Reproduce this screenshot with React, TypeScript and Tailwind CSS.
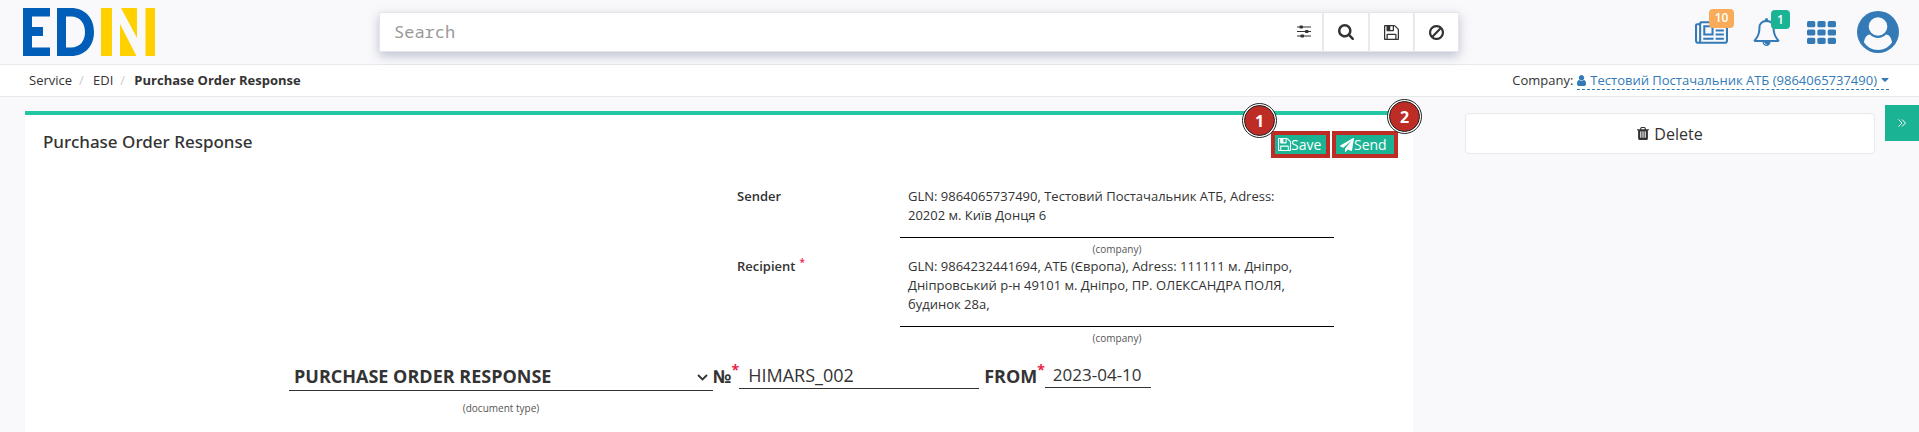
import type { ReactNode } from "react";

type IconProps = { className?: string; viewBox?: string; children: ReactNode };

function Icon({ className = "", viewBox = "0 0 1792 1792", children }: IconProps) {
  return (
    <svg className={className} viewBox={viewBox} fill="currentColor" aria-hidden="true">
      {children}
    </svg>
  );
}

function FloppyIcon({ className }: { className?: string }) {
  return (
    <Icon className={className} viewBox="128 128 1536 1536">
      <path d="M512 1536h768v-384h-768v384zm896 0h128v-896q0-14-10-38.5t-20-34.5l-281-281q-10-10-34-20t-39-10v416q0 40-28 68t-68 28h-576q-40 0-68-28t-28-68v-416h-128v1280h128v-416q0-40 28-68t68-28h832q40 0 68 28t28 68v416zm-384-928v-320q0-13-9.5-22.5t-22.5-9.5h-192q-13 0-22.5 9.5t-9.5 22.5v320q0 13 9.5 22.5t22.5 9.5h192q13 0 22.5-9.5t9.5-22.5zm640 32v928q0 40-28 68t-68 28h-1344q-40 0-68-28t-28-68v-1344q0-40 28-68t68-28h928q40 0 88 20t76 48l280 280q28 28 48 76t20 88z" />
    </Icon>
  );
}

function Logo() {
  return (
    <svg className="h-12 w-[132px]" viewBox="0 0 132 48" role="img" aria-label="EDIN">
      <g fill="#005eb8">
        <path d="M0 0H27V8.500H9V19H20V28H9V39.500H27V48H0Z" />
        <path fillRule="evenodd" d="M34 0H48C62 0 71 10 71 24S62 48 48 48H34ZM43 8.500V39.500H48C57 39.500 62 33 62 24S57 8.500 48 8.500Z" />
      </g>
      <g fill="#ffd100">
        <path d="M78 0H89V48H78ZM97 16L113.500 48H97ZM98 0H114V30ZM122.500 0H132V48H122.500Z" />
      </g>
    </svg>
  );
}

const toolButton =
  "flex items-center justify-center border-l-2 border-[#e7eaec] bg-white text-[#333]";

function SearchBar() {
  return (
    <form
      className="mx-auto flex h-10 w-full max-w-[1080px] border border-[#e5e6ec] bg-white shadow-[0_4px_10px_rgba(80,90,130,0.35)]"
      onSubmit={(e) => e.preventDefault()}
    >
      <input
        type="search"
        aria-label="Search"
        placeholder="Search"
        className="min-w-0 flex-1 bg-white px-[14px] font-['Noto_Sans_Mono','DejaVu_Sans_Mono',monospace] text-[17px] text-[#555] outline-none placeholder:text-[#999]"
      />
      <button type="button" aria-label="Filters" className="flex w-9 items-center justify-center text-[#333]">
        <svg className="h-[14px] w-[14px]" viewBox="0 0 14 14" aria-hidden="true">
          <g fill="currentColor">
            <path d="M0 1.500h14v1H0ZM0 6h14v1H0ZM0 10.500h14v1H0Z" />
            <rect x="2.500" y="0.500" width="3.500" height="3" rx="0.800" />
            <rect x="8" y="5" width="3.500" height="3" rx="0.800" />
            <rect x="3.500" y="9.500" width="3.500" height="3" rx="0.800" />
          </g>
        </svg>
      </button>
      <button type="submit" aria-label="Run search" className={`${toolButton} w-[46px]`}>
        <Icon className="h-4 w-4" viewBox="64 128 1664 1664">
          <path d="M1216 832q0-185-131.500-316.500t-316.500-131.500-316.500 131.500-131.500 316.500 131.500 316.500 316.500 131.500 316.500-131.500 131.500-316.500zm512 832q0 52-38 90t-90 38q-54 0-90-38l-343-342q-179 124-399 124-143 0-273.500-55.500t-225-150-150-225-55.500-273.500 55.500-273.500 150-225 225-150 273.500-55.500 273.500 55.500 225 150 150 225 55.500 273.500q0 220-124 399l343 343q37 37 37 90z" />
        </Icon>
      </button>
      <button type="button" aria-label="Save search" className={`${toolButton} w-[45px]`}>
        <FloppyIcon className="h-[15px] w-[15px]" />
      </button>
      <button type="reset" aria-label="Clear search" className={`${toolButton} w-[45px]`}>
        <Icon className="h-[15px] w-[15px]" viewBox="128 125 1536 1536">
          <path d="M1440 893q0-161-87-295l-754 753q137 89 297 89 111 0 211.500-43.500t173.500-116.500 116-174.500 43-212.500zm-999 299l755-754q-135-91-300-91-148 0-273 73t-198 199-73 274q0 162 89 299zm1223-299q0 157-61 300t-163.500 246-245 164-298.500 61-298.500-61-245-164-163.500-246-61-300 61-299.500 163.500-245.500 245-164 298.500-61 298.500 61 245 164 163.500 245.500 61 299.500z" />
        </Icon>
      </button>
    </form>
  );
}

function Header() {
  return (
    <header className="flex h-16 items-center pr-5 pl-[23px]">
      <a href="#home" className="w-[356px] shrink-0">
        <Logo />
      </a>
      <div className="min-w-0 flex-1">
        <SearchBar />
      </div>
      <nav className="flex w-[440px] shrink-0 items-center justify-end text-[#337ab7]">
        <a href="#news" aria-label="News" className="relative mr-[25px]">
          <Icon className="h-[23px] w-[33px]" viewBox="0 256 2048 1408">
            <path d="M1024 640h-384v384h384v-384zm128 640v128h-640v-128h640zm0-768v640h-640v-640h640zm640 768v128h-512v-128h512zm0-256v128h-512v-128h512zm0-256v128h-512v-128h512zm0-256v128h-512v-128h512zm-1536 960v-960h-128v960q0 26 19 45t45 19 45-19 19-45zm1664 0v-1040q0-48-48-48h-1440q-48 0-48 48v1040q0 33-11 64h1483q26 0 45-19t19-45zm128-1056v1056q0 80-56 136t-136 56h-1664q-80 0-136-56t-56-136v-960q0-128 128-128h128q0-128 128-128h1536q128 0 128 160z" />
          </Icon>
          <span className="absolute -top-3 left-[14px] flex h-[19px] w-[25px] items-center justify-center rounded bg-[#f8ac59] text-xs font-semibold text-white">
            10
          </span>
        </a>
        <a href="#notifications" aria-label="Notifications" className="relative mr-[27px]">
          <Icon className="h-7 w-[27px]" viewBox="64 0 1664 1792">
            <path d="M912 1696q0-16-16-16-59 0-101.500-42.500t-42.500-101.500q0-16-16-16t-16 16q0 73 51.500 124.500t124.500 51.500q16 0 16-16zm-666-288h1300q-266-300-266-832 0-51-24-105t-69-103-121.500-80.500-169.500-31.500-169.500 31.500-121.500 80.500-69 103-24 105q0 532-266 832zm1482 0q0 52-38 90t-90 38h-448q0 106-75 181t-181 75-181-75-75-181h-448q-52 0-90-38t-38-90q50-42 91-88t85-119.500 74.500-158.500 50-206 19.500-260q0-152 117-282.500t307-158.500q-8-19-8-39 0-40 28-68t68-28 68 28 28 68q0 20-8 39 190 28 307 158.500t117 282.500q0 139 19.500 260t50 206 74.500 158.500 85 119.500 91 88z" />
          </Icon>
          <span className="absolute -top-2 left-[18px] flex h-[19px] w-[19px] items-center justify-center rounded bg-[#1ab394] text-xs font-semibold text-white">
            1
          </span>
        </a>
        <a href="#apps" aria-label="Applications" className="mr-[21px]">
          <Icon className="h-[23px] w-[29px]" viewBox="0 0 1792 1408">
            {[0, 640, 1280].map((x) =>
              [0, 512, 1024].map((y) => (
                <rect key={`${x}-${y}`} x={x} y={y} width="512" height="384" rx="96" />
              )),
            )}
          </Icon>
        </a>
        <a href="#profile" aria-label="Profile">
          <svg className="h-[42px] w-[42px]" viewBox="0 0 42 42" aria-hidden="true">
            <circle cx="21" cy="21" r="21" fill="currentColor" />
            <circle cx="21" cy="15.500" r="9.300" fill="#f9f9fb" />
            <path d="M7 31.500C7.500 26.500 10 23.500 13 23.500C17 28 25 28 29 23.500C32 23.500 34.500 26.500 35 31.500C32 36 27 39 21 39S10 36 7 31.500Z" fill="#f9f9fb" />
          </svg>
        </a>
      </nav>
    </header>
  );
}

function Breadcrumbs() {
  return (
    <div className="flex h-[33px] items-center justify-between border-y border-[#e7eaec] bg-white pr-[30px] pl-[29px] text-[13px]">
      <nav aria-label="Breadcrumb">
        <ol className="flex items-center">
          <li>
            <a href="#service">Service</a>
          </li>
          <li className="flex">
            <span className="w-[21px] pl-[7px] text-[#ccc]">/</span>
            <a href="#edi">EDI</a>
          </li>
          <li className="flex">
            <span className="w-[21px] pl-[7px] text-[#ccc]">/</span>
            <strong className="font-bold" aria-current="page">
              Purchase Order Response
            </strong>
          </li>
        </ol>
      </nav>
      <div className="flex items-center gap-1">
        <span>Company:</span>
        <a href="#company" className="flex items-center gap-1 border-b border-dashed border-[#337ab7] leading-[18px] text-[#337ab7]">
          <Icon className="h-[11px] w-[9px]" viewBox="256 128 1280 1536">
            <path d="M1536 1399q0 109-62.500 187t-150.500 78h-854q-88 0-150.500-78t-62.500-187q0-85 8.500-160.500t31.500-152 58.500-131 94-89 134.500-34.500q131 128 313 128t313-128q76 0 134.500 34.500t94 89 58.500 131 31.500 152 8.500 160.500zm-256-887q0 159-112.500 271.500t-271.500 112.500-271.500-112.500-112.500-271.500 112.500-271.500 271.500-112.500 271.500 112.500 112.500 271.500z" />
          </Icon>
          <span>Тестовий Постачальник АТБ (9864065737490)</span>
          <Icon className="h-1 w-2" viewBox="384 640 1024 576">
            <path d="M1408 704q0 26-19 45l-448 448q-19 19-45 19t-45-19l-448-448q-19-19-19-45t19-45 45-19h896q26 0 45 19t19 45z" />
          </Icon>
        </a>
      </div>
    </div>
  );
}

function StepBadge({ className, children }: { className: string; children: ReactNode }) {
  return (
    <span
      className={`absolute flex h-[35px] w-[35px] items-center justify-center rounded-full border border-[#222] bg-white p-px ${className}`}
    >
      <span className="flex h-full w-full items-center justify-center rounded-full border border-[#222] bg-[#bd2d26] text-base font-bold text-white">
        {children}
      </span>
    </span>
  );
}

const actionButton =
  "flex items-center border-4 border-[#bd2d26] bg-[#1ab394] text-sm text-white";

function Actions() {
  return (
    <div className="flex items-start gap-[2px]">
      <div className="relative">
        <button type="button" className={`${actionButton} h-[27px] w-[59px] pl-[3px]`}>
          <FloppyIcon className="h-[13px] w-[13px]" />
          Save
        </button>
        <StepBadge className="-top-7 -left-[29px]">1</StepBadge>
      </div>
      <div className="relative">
        <button type="button" className={`${actionButton} h-[27px] w-[66px] pl-1`}>
          <Icon className="h-[14px] w-[14px]">
            <path d="M1764 11q33 24 27 64l-256 1536q-5 29-32 45-14 8-31 8-11 0-24-5l-453-185-242 295q-18 23-49 23-13 0-22-4-19-7-30.500-23.500t-11.500-36.500v-349l864-1059-1069 925-395-162q-37-14-40-55-2-40 32-59l1664-960q15-9 32-9 20 0 36 11z" />
          </Icon>
          Send
        </button>
        <StepBadge className="-top-8 -right-6">2</StepBadge>
      </div>
    </div>
  );
}

function Party({ label, required, children }: { label: string; required?: boolean; children: ReactNode }) {
  return (
    <div className="flex">
      <dt className="w-[163px] shrink-0 font-semibold">
        {label}
        {required && <sup className="ml-1 text-[10px] text-[#ed1c4a]">*</sup>}
      </dt>
      <dd className="w-[434px]">
        <div className="border-b border-black px-2 pb-3">{children}</div>
        <p className="pt-[3px] text-center text-[10px] leading-4 text-[#555]">(company)</p>
      </dd>
    </div>
  );
}

const Star = () => <sup className="-top-2 text-sm leading-none text-[#ed1c4a]">*</sup>;

function DocumentCard() {
  return (
    <main className="min-w-0 flex-1 border-t-4 border-[#23c6a3] bg-white">
      <div className="flex items-start justify-between pt-4 pr-[15px] pl-[18px]">
        <h1 className="font-['Noto_Sans',sans-serif] text-[17px] leading-[22px] font-medium">Purchase Order Response</h1>
        <Actions />
      </div>
      <dl className="mt-[29px] ml-[712px] text-[13px] leading-[19px]">
        <Party label="Sender">
          GLN: 9864065737490, Тестовий Постачальник АТБ, Adress:
          <br />
          20202 м. Київ Донця 6
        </Party>
        <Party label="Recipient" required>
          GLN: 9864232441694, АТБ (Європа), Adress: 111111 м. Дніпро,
          <br />
          Дніпровський р-н 49101 м. Дніпро, ПР. ОЛЕКСАНДРА ПОЛЯ,
          <br />
          будинок 28а,
        </Party>
      </dl>
      <div className="mt-[14px] ml-[264px] flex items-start pb-5 text-lg">
        <div className="w-[424px]">
          <div className="relative">
            <select
              aria-label="Document type"
              className="h-[31px] w-full appearance-none border-b border-[#333] bg-transparent pt-[2px] pl-[5px] font-bold outline-none"
            >
              <option>PURCHASE ORDER RESPONSE</option>
            </select>
            <svg className="pointer-events-none absolute top-[14px] right-[5px] h-[7px] w-[11px]" viewBox="0 0 11 7" fill="none" stroke="currentColor" strokeWidth="1.800" aria-hidden="true">
              <path d="M1 1l4.500 4.500L10 1" />
            </svg>
          </div>
          <p className="mt-[9px] text-center text-[10px] leading-4 text-[#555]">(document type)</p>
        </div>
        <label htmlFor="number" className="pt-[2px] font-bold whitespace-nowrap">
          №<Star />
        </label>
        <input id="number" defaultValue="HIMARS_002" className="h-[29px] w-60 border-b border-[#333] px-[9px] pt-[2px] outline-none" />
        <label htmlFor="date" className="ml-[5px] pt-[2px] font-bold whitespace-nowrap">
          FROM
          <Star />
        </label>
        <input id="date" defaultValue="2023-04-10" className="h-7 w-[106px] border-b border-[#333] px-2 pt-[2px] text-[17px] outline-none" />
      </div>
    </main>
  );
}

export default function App() {
  return (
    <div className="min-h-screen overflow-hidden bg-[#f9f9fb] font-['Open_Sans','Noto_Sans',sans-serif] text-[#333]">
      <Header />
      <Breadcrumbs />
      <div className="flex items-start pt-[14px] pl-[25px]">
        <DocumentCard />
        <aside className="flex w-[506px] shrink-0 items-start">
          <button
            type="button"
            className="mt-[2px] ml-[52px] flex h-[41px] flex-1 items-center justify-center gap-[5px] rounded-sm border border-[#e7eaec] bg-white text-base"
          >
            <Icon className="h-[15px] w-3" viewBox="192 128 1408 1536">
              <path d="M704 1376v-704q0-14-9-23t-23-9h-64q-14 0-23 9t-9 23v704q0 14 9 23t23 9h64q14 0 23-9t9-23zm256 0v-704q0-14-9-23t-23-9h-64q-14 0-23 9t-9 23v704q0 14 9 23t23 9h64q14 0 23-9t9-23zm256 0v-704q0-14-9-23t-23-9h-64q-14 0-23 9t-9 23v704q0 14 9 23t23 9h64q14 0 23-9t9-23zm-544-992h448l-48-117q-7-9-17-11h-317q-10 2-17 11zm928 32v64q0 14-9 23t-23 9h-96v948q0 83-47 143.500t-113 60.500h-832q-66 0-113-58.500t-47-141.500v-952h-96q-14 0-23-9t-9-23v-64q0-14 9-23t23-9h309l70-167q15-37 54-63t79-26h320q40 0 79 26t54 63l70 167h309q14 0 23 9t9 23z" />
            </Icon>
            Delete
          </button>
          <button
            type="button"
            aria-label="Collapse panel"
            className="-mt-[6px] ml-[10px] flex h-9 w-[34px] items-center justify-center bg-[#1ab394] text-white"
          >
            <svg className="h-2 w-2" viewBox="0 0 8 8" fill="none" stroke="currentColor" aria-hidden="true">
              <path d="M0.500 0.500L4 4L0.500 7.500M4 0.500L7.500 4L4 7.500" />
            </svg>
          </button>
        </aside>
      </div>
    </div>
  );
}
